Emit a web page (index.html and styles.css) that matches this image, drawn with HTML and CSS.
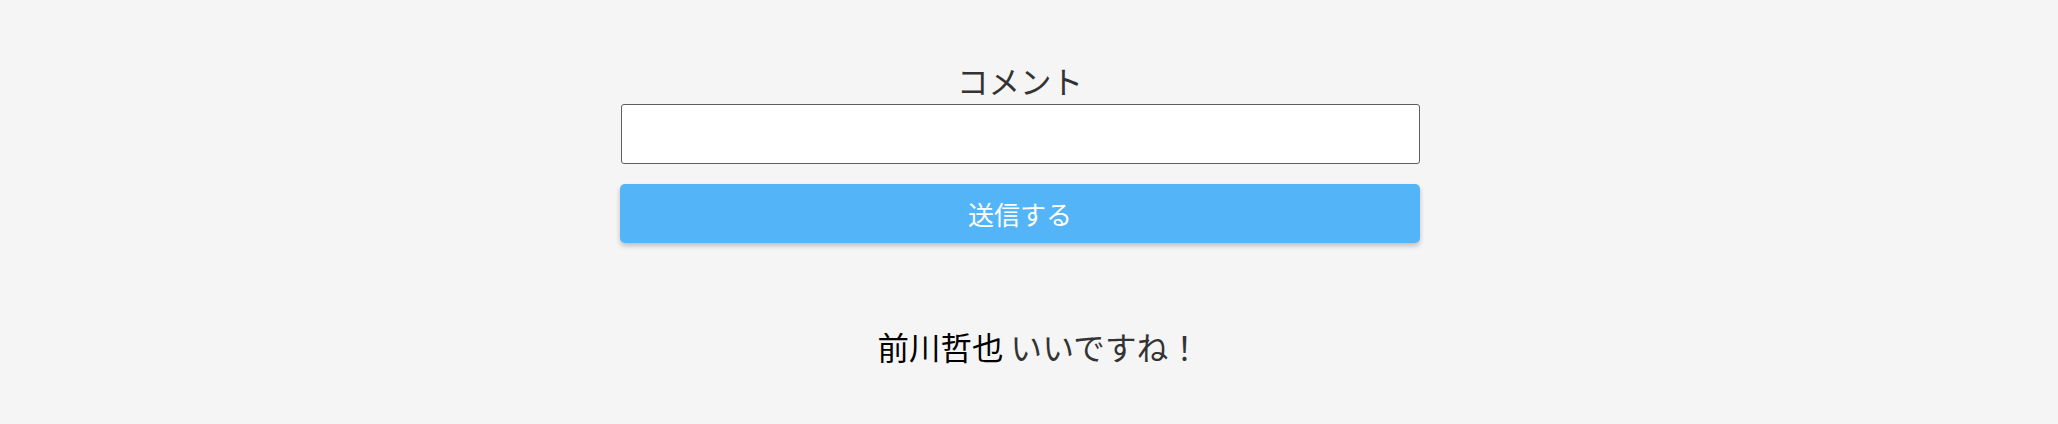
FILE: index.html
```html
<!DOCTYPE html>
<html lang="ja">
<head>
<meta charset="utf-8">
<link rel="stylesheet" href="styles.css">
</head>
<body>
<div class="page">
  <form class="comment-form">
    <label class="label" for="comment">コメント</label>
    <input class="input" id="comment" type="text">
    <button class="submit" type="button">送信する</button>
  </form>
  <ul class="comments">
    <li class="comment"><span class="name">前川哲也</span> <span class="message">いいですね！</span></li>
  </ul>
</div>
</body>
</html>
```
FILE: styles.css
```css
html, body {
  margin: 0;
  padding: 0;
  background: #f5f5f5;
}
body {
  font-family: "Noto Sans CJK JP", "Noto Sans", sans-serif;
  color: #333;
}
.page {
  display: flex;
  flex-direction: column;
  align-items: center;
  padding: 57px 18px 0 0;
}
.comment-form {
  width: 800px;
  display: flex;
  flex-direction: column;
  align-items: stretch;
}
.label {
  text-align: center;
  font-size: 31.5px;
  line-height: 46px;
  color: #333;
}
.input {
  height: 60px;
  box-sizing: border-box;
  margin: 1px 0 0 1px;
  width: 799px;
  border: 1px solid #5e5e5e;
  border-radius: 3px;
  background: #fff;
  outline: none;
}
.submit {
  margin-top: 20px;
  height: 59px;
  border: none;
  border-radius: 5px;
  background: #53b4f8;
  color: #fff;
  font-family: inherit;
  font-size: 26px;
  box-shadow: 0 3px 5px rgba(0, 0, 0, 0.22);
  cursor: pointer;
}
.comments {
  list-style: none;
  margin: 80px 0 0 0;
  padding: 0 0 0 38px;
}
.comment {
  font-size: 31.5px;
  line-height: 46px;
}
.name {
  color: #000;
}
.message {
  color: #333;
  letter-spacing: 0.3px;
}
```
